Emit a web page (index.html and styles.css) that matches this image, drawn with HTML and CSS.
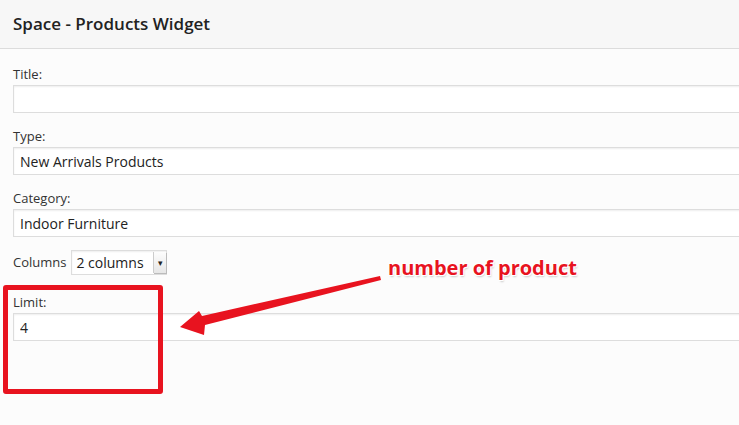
FILE: index.html
```html
<!DOCTYPE html>
<html lang="en">
  <head>
    <meta charset="UTF-8" />
    <meta name="viewport" content="width=device-width, initial-scale=1.0" />
    <title>Space - Products Widget</title>
    <link rel="stylesheet" href="styles.css">
  </head>
  <body>
    <div class="widget">
      <h3 class="widget-title">Space - Products Widget</h3>

      <div class="widget-body">
        <div class="form-group">
          <label for="title">Title:</label>
          <input type="text" id="title" value="">
        </div>

        <div class="form-group">
          <label for="type">Type:</label>
          <input type="text" id="type" value="New Arrivals Products">
        </div>

        <div class="form-group">
          <label for="category">Category:</label>
          <input type="text" id="category" value="Indoor Furniture">
        </div>

        <div class="form-row">
          <label for="columns">Columns</label>
          <div class="select-wrap">
            <select id="columns">
              <option>2 columns</option>
              <option>3 columns</option>
              <option>4 columns</option>
            </select>
            <span class="select-btn">&#9662;</span>
          </div>
        </div>

        <div class="form-group">
          <label for="limit">Limit:</label>
          <input type="text" id="limit" value="4">
        </div>
      </div>

      <!-- annotation layer -->
      <div class="highlight"></div>
      <svg class="arrow" width="739" height="425" viewBox="0 0 739 425">
        <polygon points="180,327 199,311 202,316 380,276 381,280 205,325 204,335" fill="#e8131f" />
      </svg>
      <div class="note">number of product</div>
    </div>
  </body>
</html>
```

FILE: styles.css
```css
body {
  font-family: "Open Sans", Arial, sans-serif;
  margin: 0;
  padding: 0;
  background-color: #fcfcfc;
  overflow: hidden;
}

.widget {
  position: relative;
  width: 760px;
  height: 425px;
  color: #333;
}

.widget-title {
  margin: 0;
  height: 48px;
  padding: 0 13px;
  line-height: 48px;
  font-size: 17px;
  font-weight: 600;
  color: #222;
  background-color: #f7f7f7;
  border-bottom: 1px solid #dcdcdc;
}

.widget-body {
  padding: 15px 0 0 13px;
}

.form-group {
  margin-bottom: 13px;
}

label {
  display: block;
  font-size: 13px;
  line-height: 21px;
  color: #333;
}

input[type="text"] {
  display: block;
  box-sizing: border-box;
  width: 100%;
  height: 28px;
  padding: 0 6px;
  font-family: "Open Sans", Arial, sans-serif;
  font-size: 14px;
  color: #222;
  background-color: #fff;
  border: 1px solid #ddd;
  box-shadow: inset 0 1px 2px rgba(0, 0, 0, 0.07);
  outline: none;
}

.form-row {
  display: flex;
  align-items: center;
  gap: 5px;
  margin: 2px 0 17px;
}

.form-row label {
  display: inline;
}

.select-wrap {
  position: relative;
  width: 96px;
  height: 25px;
}

.select-wrap select {
  appearance: none;
  -webkit-appearance: none;
  box-sizing: border-box;
  width: 100%;
  height: 25px;
  padding: 0 4px;
  font-family: "Open Sans", Arial, sans-serif;
  font-size: 14px;
  color: #222;
  background-color: #fff;
  border: 1px solid #ddd;
  border-radius: 0;
  box-shadow: inset 0 1px 2px rgba(0, 0, 0, 0.07);
}

.select-btn {
  position: absolute;
  top: 2px;
  right: 1px;
  width: 12px;
  height: 21px;
  font-size: 9px;
  line-height: 21px;
  text-align: center;
  color: #222;
  background: linear-gradient(#fdfdfd, #e6e6e6);
  border-left: 1px solid #ccc;
  box-shadow: 1px 1px 0 #bbb;
  pointer-events: none;
}

.highlight {
  position: absolute;
  left: 3px;
  top: 285px;
  width: 150px;
  height: 99px;
  border: 5px solid #e8131f;
  border-radius: 3px;
}

.arrow {
  position: absolute;
  left: 0;
  top: 0;
}

.note {
  position: absolute;
  left: 388px;
  top: 254px;
  font-size: 20px;
  font-weight: 700;
  color: #e8131f;
  text-shadow: 1px 1px 0 #fff, -1px -1px 0 #fff, 1px -1px 0 #fff, -1px 1px 0 #fff, 1px 2px 2px rgba(0, 0, 0, 0.2);
}
```
